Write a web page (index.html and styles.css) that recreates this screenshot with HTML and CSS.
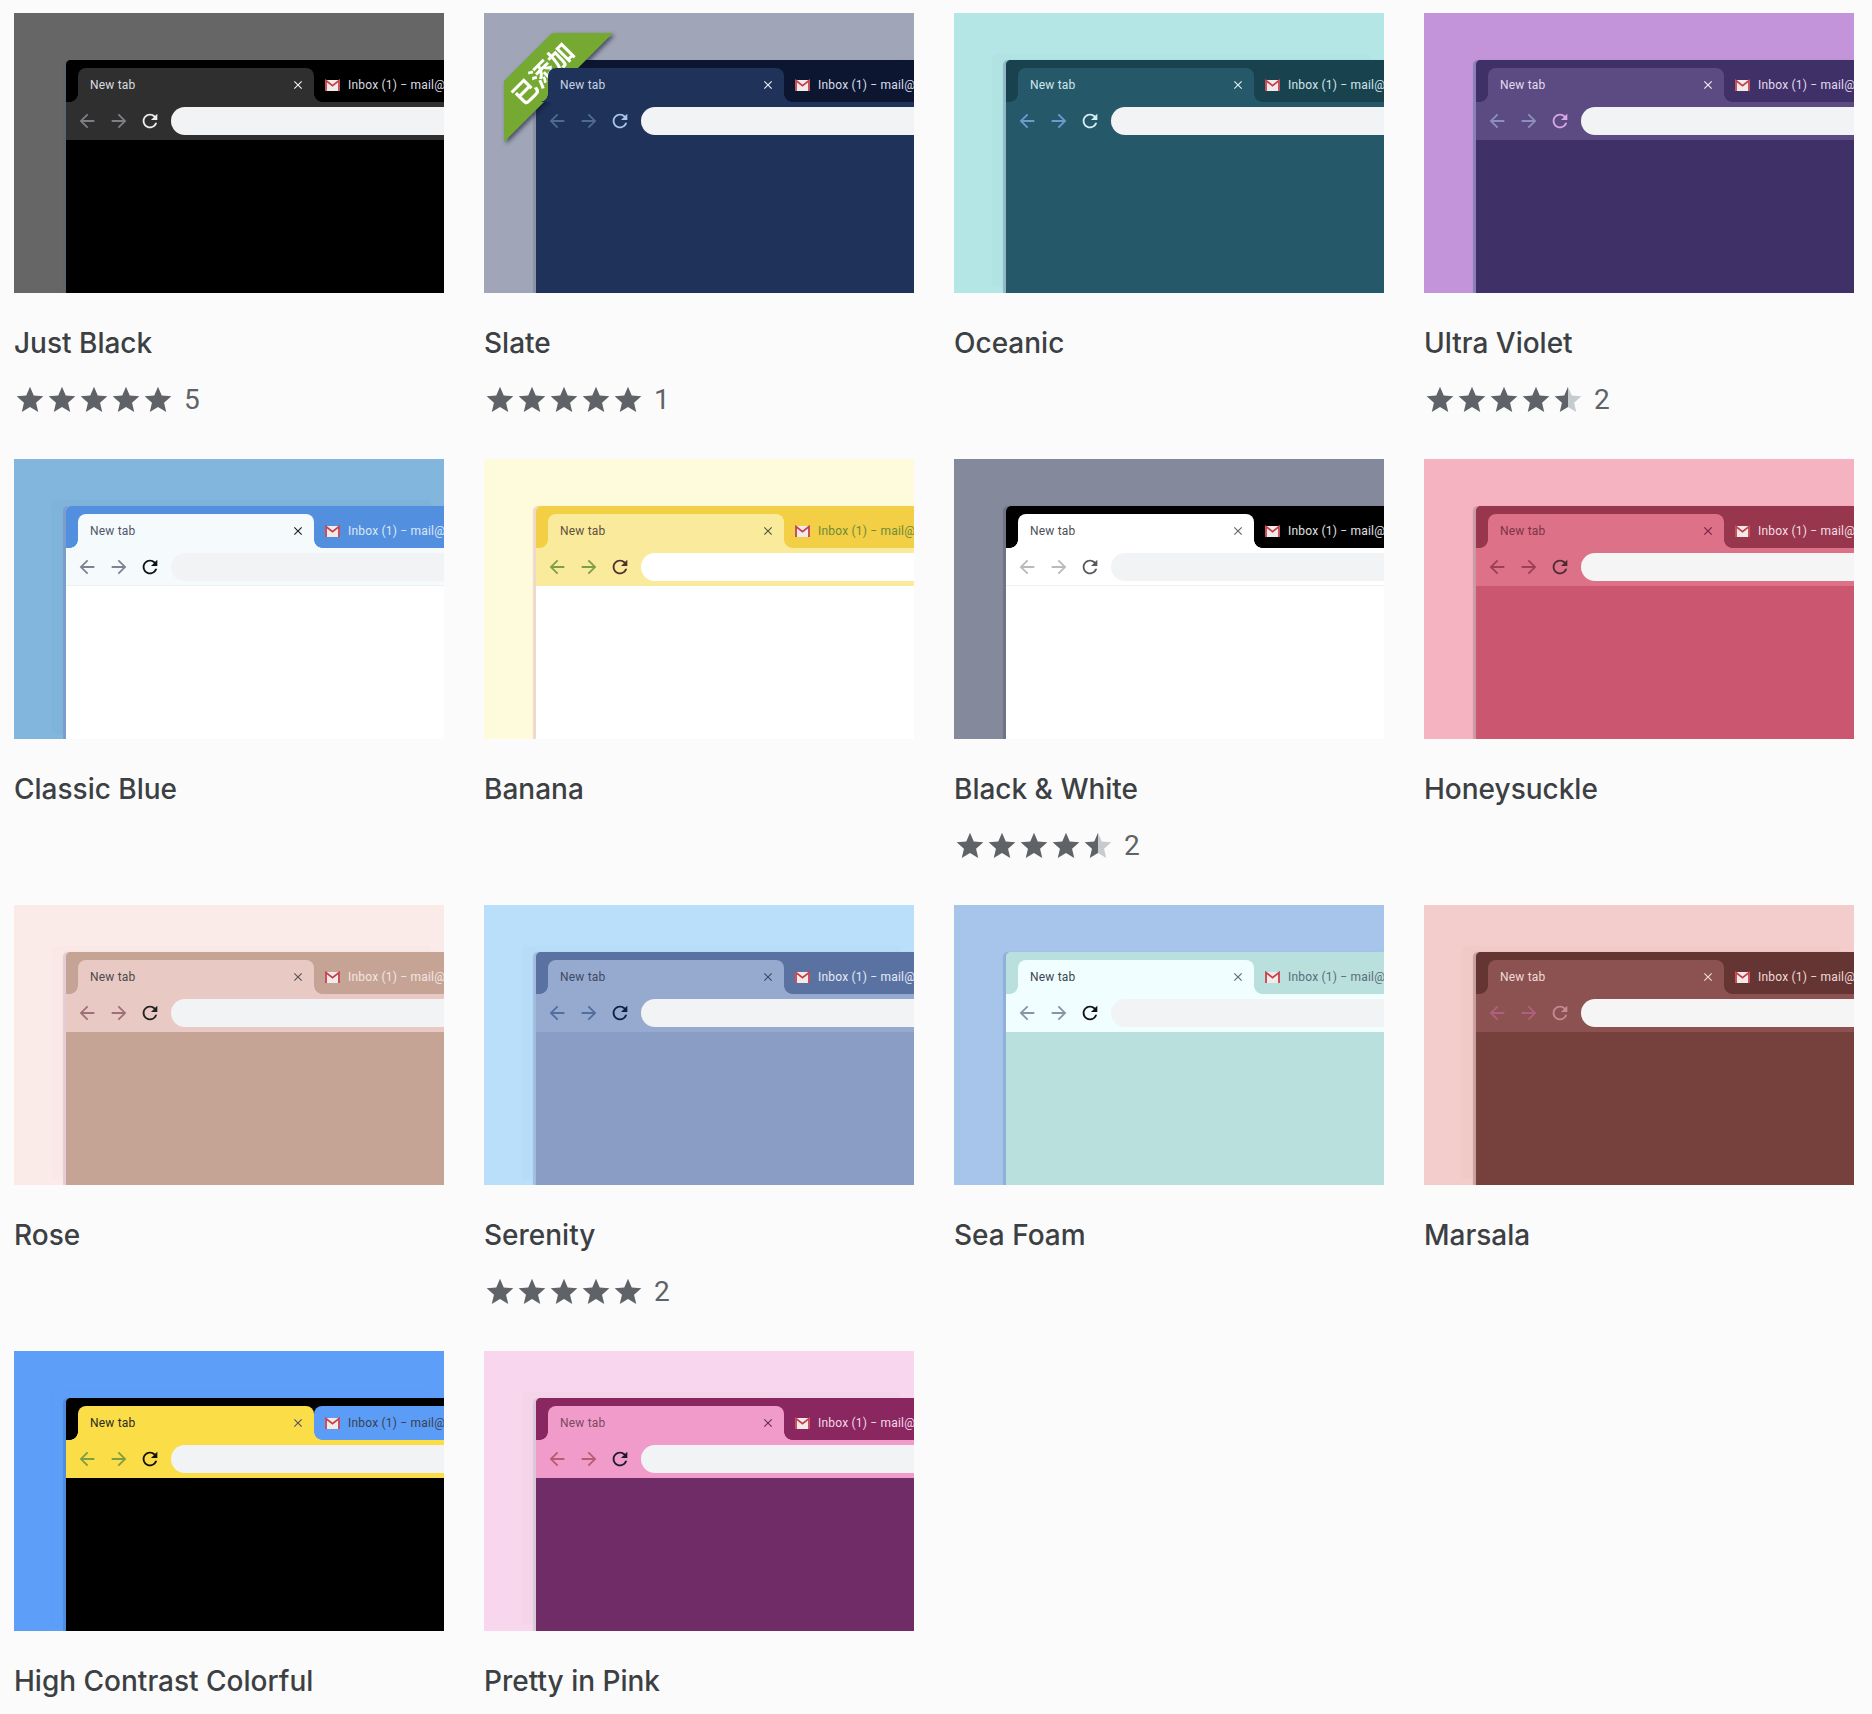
FILE: index.html
```html
<!DOCTYPE html>
<html lang="zh-CN">
<head>
  <meta charset="UTF-8">
  <title>Chrome Themes</title>
  <link rel="stylesheet" href="styles.css">
</head>
<body>
  <svg class="icon-defs" aria-hidden="true">
    <defs>
      <linearGradient id="half-fill">
        <stop offset="0.5" stop-color="#5f6368"/>
        <stop offset="0.5" stop-color="#c6cbce"/>
      </linearGradient>
    </defs>
    <symbol id="i-back" viewBox="0 0 24 24"><path fill="currentColor" d="M20 11H7.83l5.59-5.59L12 4l-8 8 8 8 1.41-1.41L7.83 13H20v-2z"/></symbol>
    <symbol id="i-forward" viewBox="0 0 24 24"><path fill="currentColor" d="M4 11h12.17l-5.59-5.59L12 4l8 8-8 8-1.41-1.41L16.17 13H4v-2z"/></symbol>
    <symbol id="i-reload" viewBox="0 0 24 24"><path fill="currentColor" d="M17.65 6.35A7.958 7.958 0 0 0 12 4c-4.42 0-7.99 3.58-7.99 8s3.57 8 7.99 8c3.73 0 6.84-2.55 7.73-6h-2.08A5.99 5.99 0 0 1 12 18c-3.31 0-6-2.69-6-6s2.69-6 6-6c1.66 0 3.14.69 4.22 1.78L13 11h7V4l-2.35 2.35z"/></symbol>
    <symbol id="i-close" viewBox="0 0 24 24"><path fill="currentColor" d="M19 6.41 17.59 5 12 10.59 6.41 5 5 6.41 10.59 12 5 17.59 6.41 19 12 13.41 17.59 19 19 17.59 13.41 12z"/></symbol>
    <symbol id="i-mail" viewBox="0 0 15 12"><path fill="#f4e9e9" d="M0 1h15v11H0z"/><path fill="none" stroke="#c4404c" stroke-width="1.8" d="M1 12V1.6l6.500 5 6.500-5V12"/></symbol>
    <symbol id="i-star" viewBox="0 0 24 24"><path fill="#5f6368" d="M12 17.270 18.180 21l-1.640-7.030L22 9.240l-7.190-.61L12 2 9.190 8.630 2 9.240l5.460 4.730L5.820 21z"/></symbol>
    <symbol id="i-star-half" viewBox="0 0 24 24"><path fill="url(#half-fill)" d="M12 17.270 18.180 21l-1.640-7.030L22 9.240l-7.190-.61L12 2 9.190 8.630 2 9.240l5.460 4.730L5.820 21z"/></symbol>
  </svg>

  <main class="grid">

    <article class="card just-black">
      <div class="thumb">
        <div class="browser">
          <div class="strip">
            <div class="tab"><span>New tab</span><svg class="close"><use href="#i-close"/></svg></div>
            <div class="other-tab"><svg class="mail"><use href="#i-mail"/></svg><span>Inbox (1) − mail@</span></div>
          </div>
          <div class="toolbar">
            <svg class="nav"><use href="#i-back"/></svg><svg class="nav"><use href="#i-forward"/></svg><svg class="reload"><use href="#i-reload"/></svg>
            <div class="omnibox"></div>
          </div>
        </div>
      </div>
      <h3>Just Black</h3>
      <div class="rating">
        <svg><use href="#i-star"/></svg><svg><use href="#i-star"/></svg><svg><use href="#i-star"/></svg><svg><use href="#i-star"/></svg><svg><use href="#i-star"/></svg>
        <span>5</span>
      </div>
    </article>

    <article class="card slate">
      <div class="thumb">
        <div class="browser">
          <div class="strip">
            <div class="tab"><span>New tab</span><svg class="close"><use href="#i-close"/></svg></div>
            <div class="other-tab"><svg class="mail"><use href="#i-mail"/></svg><span>Inbox (1) − mail@</span></div>
          </div>
          <div class="toolbar">
            <svg class="nav"><use href="#i-back"/></svg><svg class="nav"><use href="#i-forward"/></svg><svg class="reload"><use href="#i-reload"/></svg>
            <div class="omnibox"></div>
          </div>
        </div>
        <div class="ribbon"><div class="ribbon-band"><span>已添加</span></div></div>
      </div>
      <h3>Slate</h3>
      <div class="rating">
        <svg><use href="#i-star"/></svg><svg><use href="#i-star"/></svg><svg><use href="#i-star"/></svg><svg><use href="#i-star"/></svg><svg><use href="#i-star"/></svg>
        <span>1</span>
      </div>
    </article>

    <article class="card oceanic">
      <div class="thumb">
        <div class="browser">
          <div class="strip">
            <div class="tab"><span>New tab</span><svg class="close"><use href="#i-close"/></svg></div>
            <div class="other-tab"><svg class="mail"><use href="#i-mail"/></svg><span>Inbox (1) − mail@</span></div>
          </div>
          <div class="toolbar">
            <svg class="nav"><use href="#i-back"/></svg><svg class="nav"><use href="#i-forward"/></svg><svg class="reload"><use href="#i-reload"/></svg>
            <div class="omnibox"></div>
          </div>
        </div>
      </div>
      <h3>Oceanic</h3>
    </article>

    <article class="card ultra-violet">
      <div class="thumb">
        <div class="browser">
          <div class="strip">
            <div class="tab"><span>New tab</span><svg class="close"><use href="#i-close"/></svg></div>
            <div class="other-tab"><svg class="mail"><use href="#i-mail"/></svg><span>Inbox (1) − mail@</span></div>
          </div>
          <div class="toolbar">
            <svg class="nav"><use href="#i-back"/></svg><svg class="nav"><use href="#i-forward"/></svg><svg class="reload"><use href="#i-reload"/></svg>
            <div class="omnibox"></div>
          </div>
        </div>
      </div>
      <h3>Ultra Violet</h3>
      <div class="rating">
        <svg><use href="#i-star"/></svg><svg><use href="#i-star"/></svg><svg><use href="#i-star"/></svg><svg><use href="#i-star"/></svg><svg><use href="#i-star-half"/></svg>
        <span>2</span>
      </div>
    </article>

    <article class="card classic-blue">
      <div class="thumb">
        <div class="browser">
          <div class="strip">
            <div class="tab"><span>New tab</span><svg class="close"><use href="#i-close"/></svg></div>
            <div class="other-tab"><svg class="mail"><use href="#i-mail"/></svg><span>Inbox (1) − mail@</span></div>
          </div>
          <div class="toolbar">
            <svg class="nav"><use href="#i-back"/></svg><svg class="nav"><use href="#i-forward"/></svg><svg class="reload"><use href="#i-reload"/></svg>
            <div class="omnibox"></div>
          </div>
        </div>
      </div>
      <h3>Classic Blue</h3>
    </article>

    <article class="card banana">
      <div class="thumb">
        <div class="browser">
          <div class="strip">
            <div class="tab"><span>New tab</span><svg class="close"><use href="#i-close"/></svg></div>
            <div class="other-tab"><svg class="mail"><use href="#i-mail"/></svg><span>Inbox (1) − mail@</span></div>
          </div>
          <div class="toolbar">
            <svg class="nav"><use href="#i-back"/></svg><svg class="nav"><use href="#i-forward"/></svg><svg class="reload"><use href="#i-reload"/></svg>
            <div class="omnibox"></div>
          </div>
        </div>
      </div>
      <h3>Banana</h3>
    </article>

    <article class="card black-white">
      <div class="thumb">
        <div class="browser">
          <div class="strip">
            <div class="tab"><span>New tab</span><svg class="close"><use href="#i-close"/></svg></div>
            <div class="other-tab"><svg class="mail"><use href="#i-mail"/></svg><span>Inbox (1) − mail@</span></div>
          </div>
          <div class="toolbar">
            <svg class="nav"><use href="#i-back"/></svg><svg class="nav"><use href="#i-forward"/></svg><svg class="reload"><use href="#i-reload"/></svg>
            <div class="omnibox"></div>
          </div>
        </div>
      </div>
      <h3>Black &amp; White</h3>
      <div class="rating">
        <svg><use href="#i-star"/></svg><svg><use href="#i-star"/></svg><svg><use href="#i-star"/></svg><svg><use href="#i-star"/></svg><svg><use href="#i-star-half"/></svg>
        <span>2</span>
      </div>
    </article>

    <article class="card honeysuckle">
      <div class="thumb">
        <div class="browser">
          <div class="strip">
            <div class="tab"><span>New tab</span><svg class="close"><use href="#i-close"/></svg></div>
            <div class="other-tab"><svg class="mail"><use href="#i-mail"/></svg><span>Inbox (1) − mail@</span></div>
          </div>
          <div class="toolbar">
            <svg class="nav"><use href="#i-back"/></svg><svg class="nav"><use href="#i-forward"/></svg><svg class="reload"><use href="#i-reload"/></svg>
            <div class="omnibox"></div>
          </div>
        </div>
      </div>
      <h3>Honeysuckle</h3>
    </article>

    <article class="card rose">
      <div class="thumb">
        <div class="browser">
          <div class="strip">
            <div class="tab"><span>New tab</span><svg class="close"><use href="#i-close"/></svg></div>
            <div class="other-tab"><svg class="mail"><use href="#i-mail"/></svg><span>Inbox (1) − mail@</span></div>
          </div>
          <div class="toolbar">
            <svg class="nav"><use href="#i-back"/></svg><svg class="nav"><use href="#i-forward"/></svg><svg class="reload"><use href="#i-reload"/></svg>
            <div class="omnibox"></div>
          </div>
        </div>
      </div>
      <h3>Rose</h3>
    </article>

    <article class="card serenity">
      <div class="thumb">
        <div class="browser">
          <div class="strip">
            <div class="tab"><span>New tab</span><svg class="close"><use href="#i-close"/></svg></div>
            <div class="other-tab"><svg class="mail"><use href="#i-mail"/></svg><span>Inbox (1) − mail@</span></div>
          </div>
          <div class="toolbar">
            <svg class="nav"><use href="#i-back"/></svg><svg class="nav"><use href="#i-forward"/></svg><svg class="reload"><use href="#i-reload"/></svg>
            <div class="omnibox"></div>
          </div>
        </div>
      </div>
      <h3>Serenity</h3>
      <div class="rating">
        <svg><use href="#i-star"/></svg><svg><use href="#i-star"/></svg><svg><use href="#i-star"/></svg><svg><use href="#i-star"/></svg><svg><use href="#i-star"/></svg>
        <span>2</span>
      </div>
    </article>

    <article class="card sea-foam">
      <div class="thumb">
        <div class="browser">
          <div class="strip">
            <div class="tab"><span>New tab</span><svg class="close"><use href="#i-close"/></svg></div>
            <div class="other-tab"><svg class="mail"><use href="#i-mail"/></svg><span>Inbox (1) − mail@</span></div>
          </div>
          <div class="toolbar">
            <svg class="nav"><use href="#i-back"/></svg><svg class="nav"><use href="#i-forward"/></svg><svg class="reload"><use href="#i-reload"/></svg>
            <div class="omnibox"></div>
          </div>
        </div>
      </div>
      <h3>Sea Foam</h3>
    </article>

    <article class="card marsala">
      <div class="thumb">
        <div class="browser">
          <div class="strip">
            <div class="tab"><span>New tab</span><svg class="close"><use href="#i-close"/></svg></div>
            <div class="other-tab"><svg class="mail"><use href="#i-mail"/></svg><span>Inbox (1) − mail@</span></div>
          </div>
          <div class="toolbar">
            <svg class="nav"><use href="#i-back"/></svg><svg class="nav"><use href="#i-forward"/></svg><svg class="reload"><use href="#i-reload"/></svg>
            <div class="omnibox"></div>
          </div>
        </div>
      </div>
      <h3>Marsala</h3>
    </article>

    <article class="card high-contrast">
      <div class="thumb">
        <div class="browser">
          <div class="strip">
            <div class="tab"><span>New tab</span><svg class="close"><use href="#i-close"/></svg></div>
            <div class="other-tab"><svg class="mail"><use href="#i-mail"/></svg><span>Inbox (1) − mail@</span></div>
          </div>
          <div class="toolbar">
            <svg class="nav"><use href="#i-back"/></svg><svg class="nav"><use href="#i-forward"/></svg><svg class="reload"><use href="#i-reload"/></svg>
            <div class="omnibox"></div>
          </div>
        </div>
      </div>
      <h3>High Contrast Colorful</h3>
    </article>

    <article class="card pretty-pink">
      <div class="thumb">
        <div class="browser">
          <div class="strip">
            <div class="tab"><span>New tab</span><svg class="close"><use href="#i-close"/></svg></div>
            <div class="other-tab"><svg class="mail"><use href="#i-mail"/></svg><span>Inbox (1) − mail@</span></div>
          </div>
          <div class="toolbar">
            <svg class="nav"><use href="#i-back"/></svg><svg class="nav"><use href="#i-forward"/></svg><svg class="reload"><use href="#i-reload"/></svg>
            <div class="omnibox"></div>
          </div>
        </div>
      </div>
      <h3>Pretty in Pink</h3>
    </article>

  </main>
</body>
</html>
```

FILE: styles.css
```css
body { margin: 0; padding: 13px 14px 0; background: #fbfbfb; font-family: Inter, "Open Sans", sans-serif; }
.icon-defs { position: absolute; width: 0; height: 0; }

.grid { display: grid; grid-template-columns: repeat(4, 430px); grid-auto-rows: 446px; column-gap: 40px; }

.thumb { position: relative; display: flex; height: 280px; box-sizing: border-box; padding: 47px 0 0 52px; overflow: hidden; background: var(--bg); }
.browser { flex: 1; min-width: 0; border-radius: 5px 0 0 0; background: var(--page); box-shadow: -3px 0 1px var(--edge), -14px -6px 2px var(--halo); }

.strip { display: flex; height: 42px; box-sizing: border-box; padding: 8px 0 0 12px; border-radius: 5px 0 0 0; background: var(--strip); font: 12px Roboto, sans-serif; letter-spacing: 0.2px; }
.tab { position: relative; z-index: 1; display: flex; flex: none; align-items: center; justify-content: space-between; width: 236px; box-sizing: border-box; padding: 0 9px 0 12px; border-radius: 8px 8px 0 0; background: var(--tab); color: var(--text); }
.tab::before, .tab::after { content: ""; position: absolute; bottom: 0; width: 8px; height: 8px; }
.tab::before { left: -8px; background: radial-gradient(circle at 0 0, transparent 7.5px, var(--tab) 8px); }
.tab::after { right: -8px; background: radial-gradient(circle at 100% 0, transparent 7.5px, var(--tab) 8px); }
.close { width: 14px; height: 14px; color: var(--close); }
.other-tab { display: flex; flex: 1; align-items: center; min-width: 0; overflow: hidden; border-radius: 8px 0 0 0; background: var(--other, var(--strip)); color: var(--other-text); white-space: nowrap; }
.mail { flex: none; width: 15px; height: 12px; margin: 0 8px 0 11px; }

.toolbar { display: flex; align-items: center; gap: 10px; height: 38px; box-sizing: border-box; padding-left: 10px; background: var(--tab); box-shadow: inset 0 -1px 0 var(--rule, transparent); }
.nav, .reload { flex: none; width: 22px; height: 22px; }
.nav { color: var(--nav); }
.reload { margin-left: -1px; color: var(--reload); }
.omnibox { flex: 1; height: 28px; border-radius: 14px 0 0 14px; background: var(--omni, #f2f3f5); }

.ribbon { position: absolute; top: 20px; left: 20px; width: 109px; height: 109px; filter: drop-shadow(2px 2px 2px rgba(10, 15, 40, 0.6)); }
.ribbon-band { position: relative; width: 100%; height: 100%; background: #76a932; clip-path: polygon(48px 0, 109px 0, 0 109px, 0 48px); }
.ribbon-band span { position: absolute; top: 40px; left: 38px; transform: translate(-50%, -50%) rotate(-45deg); color: #fff; font: 700 25px/1 "Noto Sans CJK SC", sans-serif; white-space: nowrap; }

h3 { margin: 32px 0 0; color: #3c4043; font-size: 28px; font-weight: 500; line-height: 36px; }
.rating { display: flex; align-items: center; height: 32px; margin-top: 23px; color: #5f6368; font: 28px/32px Roboto, sans-serif; }
.rating svg { flex: none; width: 32px; height: 32px; }
.rating span { margin-left: 10px; }

/* theme colours */
.just-black { --bg: #666; --strip: #000; --tab: #2f2f2f; --page: #000; --text: #dadce0; --other-text: #dadce0; --close: #eee; --nav: #7d7f83; --reload: #eee; --edge: #5f666b; --halo: #666; }
.slate { --bg: #a0a6b8; --strip: #0d1630; --tab: #1f3259; --page: #1f3259; --text: #c8d2e4; --other-text: #d8deea; --close: #e8edf5; --nav: #4e6a90; --reload: #a9c6e4; --edge: #8c93a7; --halo: #a0a6b8; }
.oceanic { --bg: #b5e6e6; --strip: #19424f; --tab: #25596a; --page: #25596a; --text: #d2e6ea; --other-text: #d2e6ea; --close: #e0eef0; --nav: #6a9ccf; --reload: #d8eef5; --edge: #8fb8c4; --halo: #b2e3e3; }
.ultra-violet { --bg: #c494da; --strip: #403068; --tab: #5b4b82; --page: #403068; --text: #e2dcee; --other-text: #e2dcee; --close: #eee; --nav: #8d8fb8; --reload: #d9a9e0; --edge: #8a80b8; --halo: #c494da; }
.classic-blue { --bg: #82b6dd; --strip: #538fdf; --tab: #f5fafd; --page: #fff; --text: #50556a; --other-text: #dbe8f7; --close: #222; --nav: #7c8494; --reload: #111; --edge: #7a9dc9; --halo: #7fb3da; --rule: #edf1f4; }
.banana { --bg: #fefadc; --strip: #f2cf44; --tab: #faea9b; --page: #fff; --text: #5e5040; --other-text: #6f8a3a; --close: #554; --nav: #7f9e4c; --reload: #4f2f2f; --edge: #f0d8cc; --halo: #fefadc; --omni: #fff; }
.black-white { --bg: #848a9b; --strip: #000; --tab: #fff; --page: #fff; --text: #4b4f55; --other-text: #e0e2e6; --close: #666; --nav: #b9b9be; --reload: #55585c; --edge: #6d7488; --halo: #848a9b; --rule: #f0f0f2; }
.honeysuckle { --bg: #f5b2c0; --strip: #97364d; --tab: #dc7188; --page: #cb566f; --text: #7c3445; --other-text: #f5dfe3; --close: #7c1f45; --nav: #9c3f57; --reload: #4c2a30; --edge: #c99aa5; --halo: #f5b2c0; --omni: #f5f5f5; }
.rose { --bg: #fbebe8; --strip: #c5a496; --tab: #e9c9c3; --page: #c5a496; --text: #4a4a4c; --other-text: #f4e4e0; --close: #555; --nav: #a07078; --reload: #222; --edge: #e3ccd4; --halo: #f9e8e6; }
.serenity { --bg: #badffa; --strip: #5a72a1; --tab: #96a9cf; --page: #8a9dc4; --text: #3f4a65; --other-text: #e4ebf5; --close: #3f4a65; --nav: #4f6fa0; --reload: #0c2040; --edge: #a0bde0; --halo: #b6dcf8; }
.sea-foam { --bg: #a7c4ea; --strip: #b9e0dc; --tab: #f0feff; --page: #b9e0dc; --text: #3c4550; --other-text: #5a6c7c; --close: #667; --nav: #8a93a5; --reload: #111; --edge: #8fb0db; --halo: #a7c4ea; }
.marsala { --bg: #f3cdcb; --strip: #643532; --tab: #8b5251; --page: #76403d; --text: #f0dada; --other-text: #f0dada; --close: #f0dada; --nav: #b0607f; --reload: #c58a93; --edge: #c8a0a0; --halo: #f1cac8; --omni: #f5f5f5; }
.high-contrast { --bg: #5c9ef8; --strip: #000; --tab: #fbdd47; --page: #000; --other: #5b9cf7; --text: #2b2b20; --other-text: #3c3f50; --close: #556; --nav: #7f9e3f; --reload: #111; --edge: #4f8ce0; --halo: #5c9ef8; }
.pretty-pink { --bg: #f8d7ee; --strip: #8a2660; --tab: #f19bcb; --page: #702c66; --text: #7a4a60; --other-text: #f4d8e8; --close: #634; --nav: #b85c70; --reload: #1a1a2a; --edge: #d8c8d8; --halo: #f5d4ea; }
```
